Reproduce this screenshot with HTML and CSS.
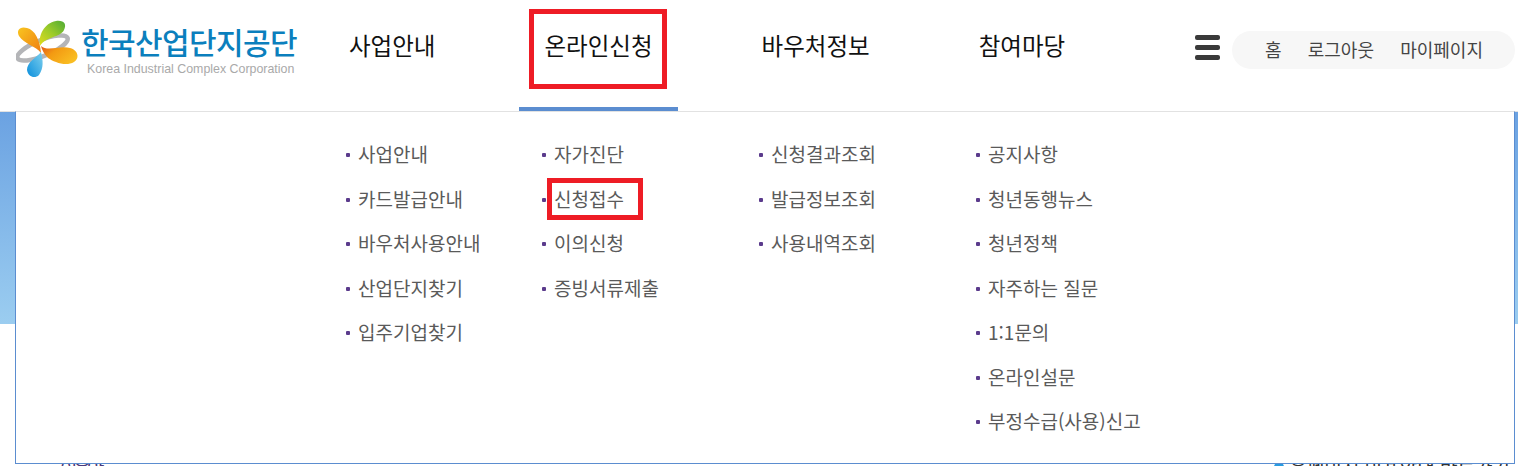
FILE: index.html
```html
<!DOCTYPE html>
<html lang="ko">
<head>
    <meta charset="UTF-8">
    <meta name="viewport" content="width=device-width, initial-scale=1.0">
    <title>한국산업단지공단</title>
    <link rel="stylesheet" href="styles.css">
</head>
<body>
    <header class="header">
        <a class="logo" href="#">
            <svg class="logo-mark" width="62" height="60" viewBox="0 0 62 60">
                <defs>
                    <linearGradient id="petalGreen" x1="0" y1="1" x2="1" y2="0">
                        <stop offset="0" stop-color="#e3dc1c"/>
                        <stop offset="0.5" stop-color="#9ccb2a"/>
                        <stop offset="1" stop-color="#4eaa35"/>
                    </linearGradient>
                    <linearGradient id="petalLeft" x1="0" y1="0" x2="1" y2="1">
                        <stop offset="0" stop-color="#f9c51f"/>
                        <stop offset="1" stop-color="#ee7d12"/>
                    </linearGradient>
                    <linearGradient id="petalRight" x1="0" y1="0" x2="1" y2="0.6">
                        <stop offset="0" stop-color="#e4571a"/>
                        <stop offset="0.4" stop-color="#f39a12"/>
                        <stop offset="1" stop-color="#f9bd22"/>
                    </linearGradient>
                    <linearGradient id="petalBlue" x1="1" y1="0" x2="0" y2="1">
                        <stop offset="0" stop-color="#7fd0ee"/>
                        <stop offset="1" stop-color="#0b8fdc"/>
                    </linearGradient>
                </defs>
                <ellipse cx="26.5" cy="28" rx="27" ry="8" transform="rotate(-22 26.5 28)" fill="none" stroke="#b4b5b8" stroke-width="4.5"/>
                <path d="M24 26C22 16 28 3 40 1C48 0 51 4 48 10C44 18 30 16 24 26Z" fill="url(#petalGreen)"/>
                <path d="M25 33C20 26 8 24 3 16C0 10 4 6 11 8C19 10 24 20 25 33Z" fill="url(#petalLeft)"/>
                <path d="M25 26C32 32 44 25 54 28C62 30 64 38 58 42C50 47 38 42 32 38C28 34 26 30 25 26Z" fill="url(#petalRight)"/>
                <path d="M25 32C27 40 28 48 23 55C19 59 12 57 11 50C11 42 20 38 25 32Z" fill="url(#petalBlue)"/>
            </svg>
            <span class="logo-text">
                <span class="logo-name">한국산업단지공단</span>
                <span class="logo-sub">Korea Industrial Complex Corporation</span>
            </span>
        </a>

        <nav class="gnb">
            <a href="#">사업안내</a>
            <a href="#" class="active">온라인신청<i class="mark mark-gnb"></i></a>
            <a href="#">바우처정보</a>
            <a href="#">참여마당</a>
        </nav>

        <div class="hamburger"><span></span><span></span><span></span></div>

        <div class="util">
            <a href="#">홈</a>
            <a href="#">로그아웃</a>
            <a href="#">마이페이지</a>
        </div>
    </header>

    <div class="hero"></div>

    <div class="below">
        <span class="below-left">이용안내</span>
        <span class="below-right"><i class="below-dot"></i>홈페이지 이용안내 바로가기</span>
    </div>

    <div class="submenu">
        <ul>
            <li>사업안내</li>
            <li>카드발급안내</li>
            <li>바우처사용안내</li>
            <li>산업단지찾기</li>
            <li>입주기업찾기</li>
        </ul>
        <ul>
            <li>자가진단</li>
            <li>신청접수<i class="mark mark-sub"></i></li>
            <li>이의신청</li>
            <li>증빙서류제출</li>
        </ul>
        <ul>
            <li>신청결과조회</li>
            <li>발급정보조회</li>
            <li>사용내역조회</li>
        </ul>
        <ul>
            <li>공지사항</li>
            <li>청년동행뉴스</li>
            <li>청년정책</li>
            <li>자주하는 질문</li>
            <li>1:1문의</li>
            <li>온라인설문</li>
            <li>부정수급(사용)신고</li>
        </ul>
    </div>
</body>
</html>
```
FILE: styles.css
```css
* {
    margin: 0;
    padding: 0;
    box-sizing: border-box;
}

html, body {
    height: 466px;
    overflow: hidden;
}

body {
    position: relative;
    font-family: "Noto Sans CJK KR", "Noto Sans", sans-serif;
    background: white;
    color: #333;
}

a {
    color: inherit;
    text-decoration: none;
}

.header {
    height: 112px;
    display: flex;
    align-items: flex-start;
    border-bottom: 1px solid #e2e2e2;
    background: white;
}

.logo {
    width: 324px;
    padding: 20px 0 0 16px;
    display: flex;
    gap: 3px;
}

.logo-text {
    display: flex;
    flex-direction: column;
}

.logo-name {
    font-size: 30px;
    line-height: 42px;
    height: 42px;
    font-weight: 500;
    color: #0b7fbd;
    letter-spacing: -0.6px;
    white-space: nowrap;
}

.logo-sub {
    font-family: "Liberation Sans", sans-serif;
    font-size: 12.4px;
    line-height: 14px;
    margin-left: 6px;
    color: #a9a9a9;
    white-space: nowrap;
}

.gnb {
    display: flex;
    gap: 59px;
    width: 871px;
}

.gnb a {
    position: relative;
    height: 111px;
    padding: 0 25px;
    font-size: 23.5px;
    line-height: 90px;
    color: #111;
    white-space: nowrap;
}

.gnb a.active {
    border-bottom: 4px solid #5b8dd0;
}

.hamburger {
    width: 25px;
    margin-top: 35px;
    flex-shrink: 0;
}

.hamburger span {
    display: block;
    height: 5px;
    margin-bottom: 5px;
    border-radius: 2px;
    background: #3a3a3a;
}

.util {
    position: absolute;
    left: 1232px;
    top: 31px;
    width: 283px;
    height: 38px;
    display: flex;
    align-items: center;
    justify-content: space-between;
    padding: 0 32px 2px 33px;
    border-radius: 19px;
    background: #f7f7f7;
    font-size: 18px;
    color: #444;
}

.hero {
    height: 212px;
    background: linear-gradient(#6ba2e2, #9bcdf0);
}

.below {
    display: flex;
    justify-content: space-between;
    align-items: flex-start;
    padding: 0 8px 0 60px;
    margin-top: 131px;
    font-size: 19px;
    line-height: 26px;
    color: #333;
}

.below-left {
    width: 52px;
    letter-spacing: -4px;
    color: #4a3a7a;
}

.below-right {
    display: flex;
    line-height: 22px;
}

.below-dot {
    width: 10px;
    height: 10px;
    margin: 7px 6px 0 0;
    border-radius: 50%;
    background: #2a9be0;
}

.submenu {
    position: absolute;
    left: 15px;
    top: 111px;
    width: 1500px;
    height: 353px;
    display: flex;
    padding: 20px 0 0 328px;
    border: 1px solid #5b8dd0;
    border-top: 1px solid #e2e2e2;
    background: white;
}

.submenu ul {
    list-style: none;
    width: 217px;
}

.submenu ul:first-child {
    width: 196px;
}

.submenu li {
    position: relative;
    height: 44.5px;
    padding-left: 14px;
    font-size: 19px;
    line-height: 44px;
    color: #5a5a5a;
    white-space: nowrap;
}

.submenu li::before {
    content: "";
    position: absolute;
    left: 2px;
    top: 21px;
    width: 4px;
    height: 4px;
    border-radius: 1px;
    background: #5b3b8c;
}

.mark {
    position: absolute;
    border: 5px solid #ee1c25;
    pointer-events: none;
}

.mark-gnb {
    left: 9.5px;
    top: 9px;
    width: 138px;
    height: 80px;
}

.mark-sub {
    left: 7px;
    top: 1.5px;
    width: 96px;
    height: 42px;
}
```
